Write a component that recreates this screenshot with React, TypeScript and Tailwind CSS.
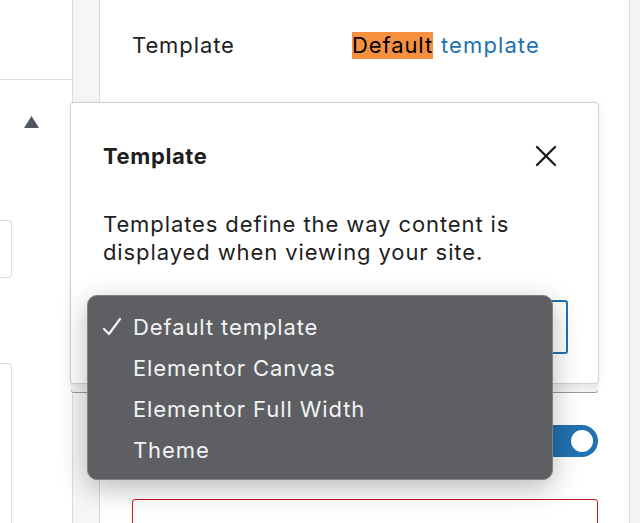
import { X } from "lucide-react";

// ─── Data ─────────────────────────────────────────────────────

const TEMPLATES = [
  "Default template",
  "Elementor Canvas",
  "Elementor Full Width",
  "Theme",
];

const font = "font-['Inter','Liberation_Sans',sans-serif]";

// ─── Pieces ───────────────────────────────────────────────────

function CheckMark() {
  return (
    <svg width="22" height="22" viewBox="0 0 22 22" className="shrink-0">
      <polyline
        points="3,12 8,17 19,2"
        fill="none"
        stroke="#f4f4f4"
        strokeWidth="2.2"
        strokeLinecap="round"
        strokeLinejoin="round"
      />
    </svg>
  );
}

function TemplateMenu() {
  return (
    <div className="absolute left-[87px] top-[295px] z-30 w-[466px] h-[185px] rounded-[10px] border border-[#808286] bg-[#5d5f63] pt-[11px] shadow-[0_8px_28px_rgba(0,0,0,0.28)]">
      {TEMPLATES.map((t, i) => (
        <div key={t} className="flex h-[41px] items-center">
          <div className="flex w-[45px] shrink-0 pl-[13px]">
            {i === 0 && <CheckMark />}
          </div>
          <span className="text-[22px] tracking-[0.9px] text-[#f3f3f3]">{t}</span>
        </div>
      ))}
    </div>
  );
}

function TemplatePopover() {
  return (
    <div className="absolute left-[70px] top-[102px] z-20 w-[529px] h-[282px] rounded-[4px] border border-[#cfcfcf] bg-white px-[32px] pt-[39px] text-[#1e1e1e] shadow-[0_2px_8px_rgba(0,0,0,0.08),0_9px_0_-1px_#f4f4f4,0_10px_0_-1px_#9a9a9a]">
      <div className="flex h-[28px] items-center justify-between">
        <h2 className="text-[22px] font-bold leading-[28px] tracking-[0.6px]">Template</h2>
        <X size={36} strokeWidth={1.6} className="mr-[2px]" />
      </div>
      <p className="mt-[40px] text-[22px] leading-[28px] tracking-[0.9px]">
        Templates define the way content is
        <br />
        displayed when viewing your site.
      </p>
      {/* select under the open menu */}
      <div className="mt-[34px] h-[54px] w-[465px] rounded-[3px] border-2 border-[#2271b1]" />
    </div>
  );
}

// ─── App ──────────────────────────────────────────────────────

export default function App() {
  return (
    <div className={`relative flex h-[523px] w-[640px] overflow-hidden bg-white ${font}`}>
      {/* left column */}
      <div className="flex w-[72px] shrink-0 flex-col">
        <div className="h-[80px] shrink-0 border-b border-[#dcdcde]" />
        <div className="flex h-[84px] shrink-0 items-center pl-[24px]">
          <svg width="15" height="12" viewBox="0 0 15 12">
            <polygon points="7.5,0 15,12 0,12" fill="#50575e" />
          </svg>
        </div>
        <div className="mt-[56px] h-[58px] w-[12px] shrink-0 rounded-r-[4px] border border-l-0 border-[#dcdcde]" />
        <div className="mt-[85px] h-[200px] w-[12px] shrink-0 rounded-tr-[4px] border border-l-0 border-[#dcdcde]" />
      </div>

      {/* gutter */}
      <div className="w-[28px] shrink-0 border-x border-[#dcdcde] bg-[#f6f6f6]" />

      {/* settings panel */}
      <div className="flex w-[530px] shrink-0 flex-col border-r border-[#dcdcde] pl-[32px] pr-[31px] text-[22px] tracking-[0.9px] text-[#1e1e1e]">
        <div className="flex h-[90px] shrink-0 items-center">
          <span className="w-[220px]">Template</span>
          <span className="bg-[#f5903f] leading-[27px] text-black">Default</span>
          <span className="ml-[8px] tracking-[1.1px] text-[#2271b1]">template</span>
        </div>
        <div className="mt-[335px] flex shrink-0 justify-end">
          <div className="flex h-[32px] w-[60px] items-center justify-end rounded-full bg-[#2271b1] pr-[5px]">
            <div className="h-[22px] w-[22px] rounded-full bg-white" />
          </div>
        </div>
        <div className="mt-[42px] h-[60px] shrink-0 rounded-[3px] border-[1.5px] border-[#cc1818]" />
      </div>

      {/* right edge */}
      <div className="flex-1 bg-[#f3f3f3]" />

      <TemplatePopover />
      <TemplateMenu />
    </div>
  );
}
